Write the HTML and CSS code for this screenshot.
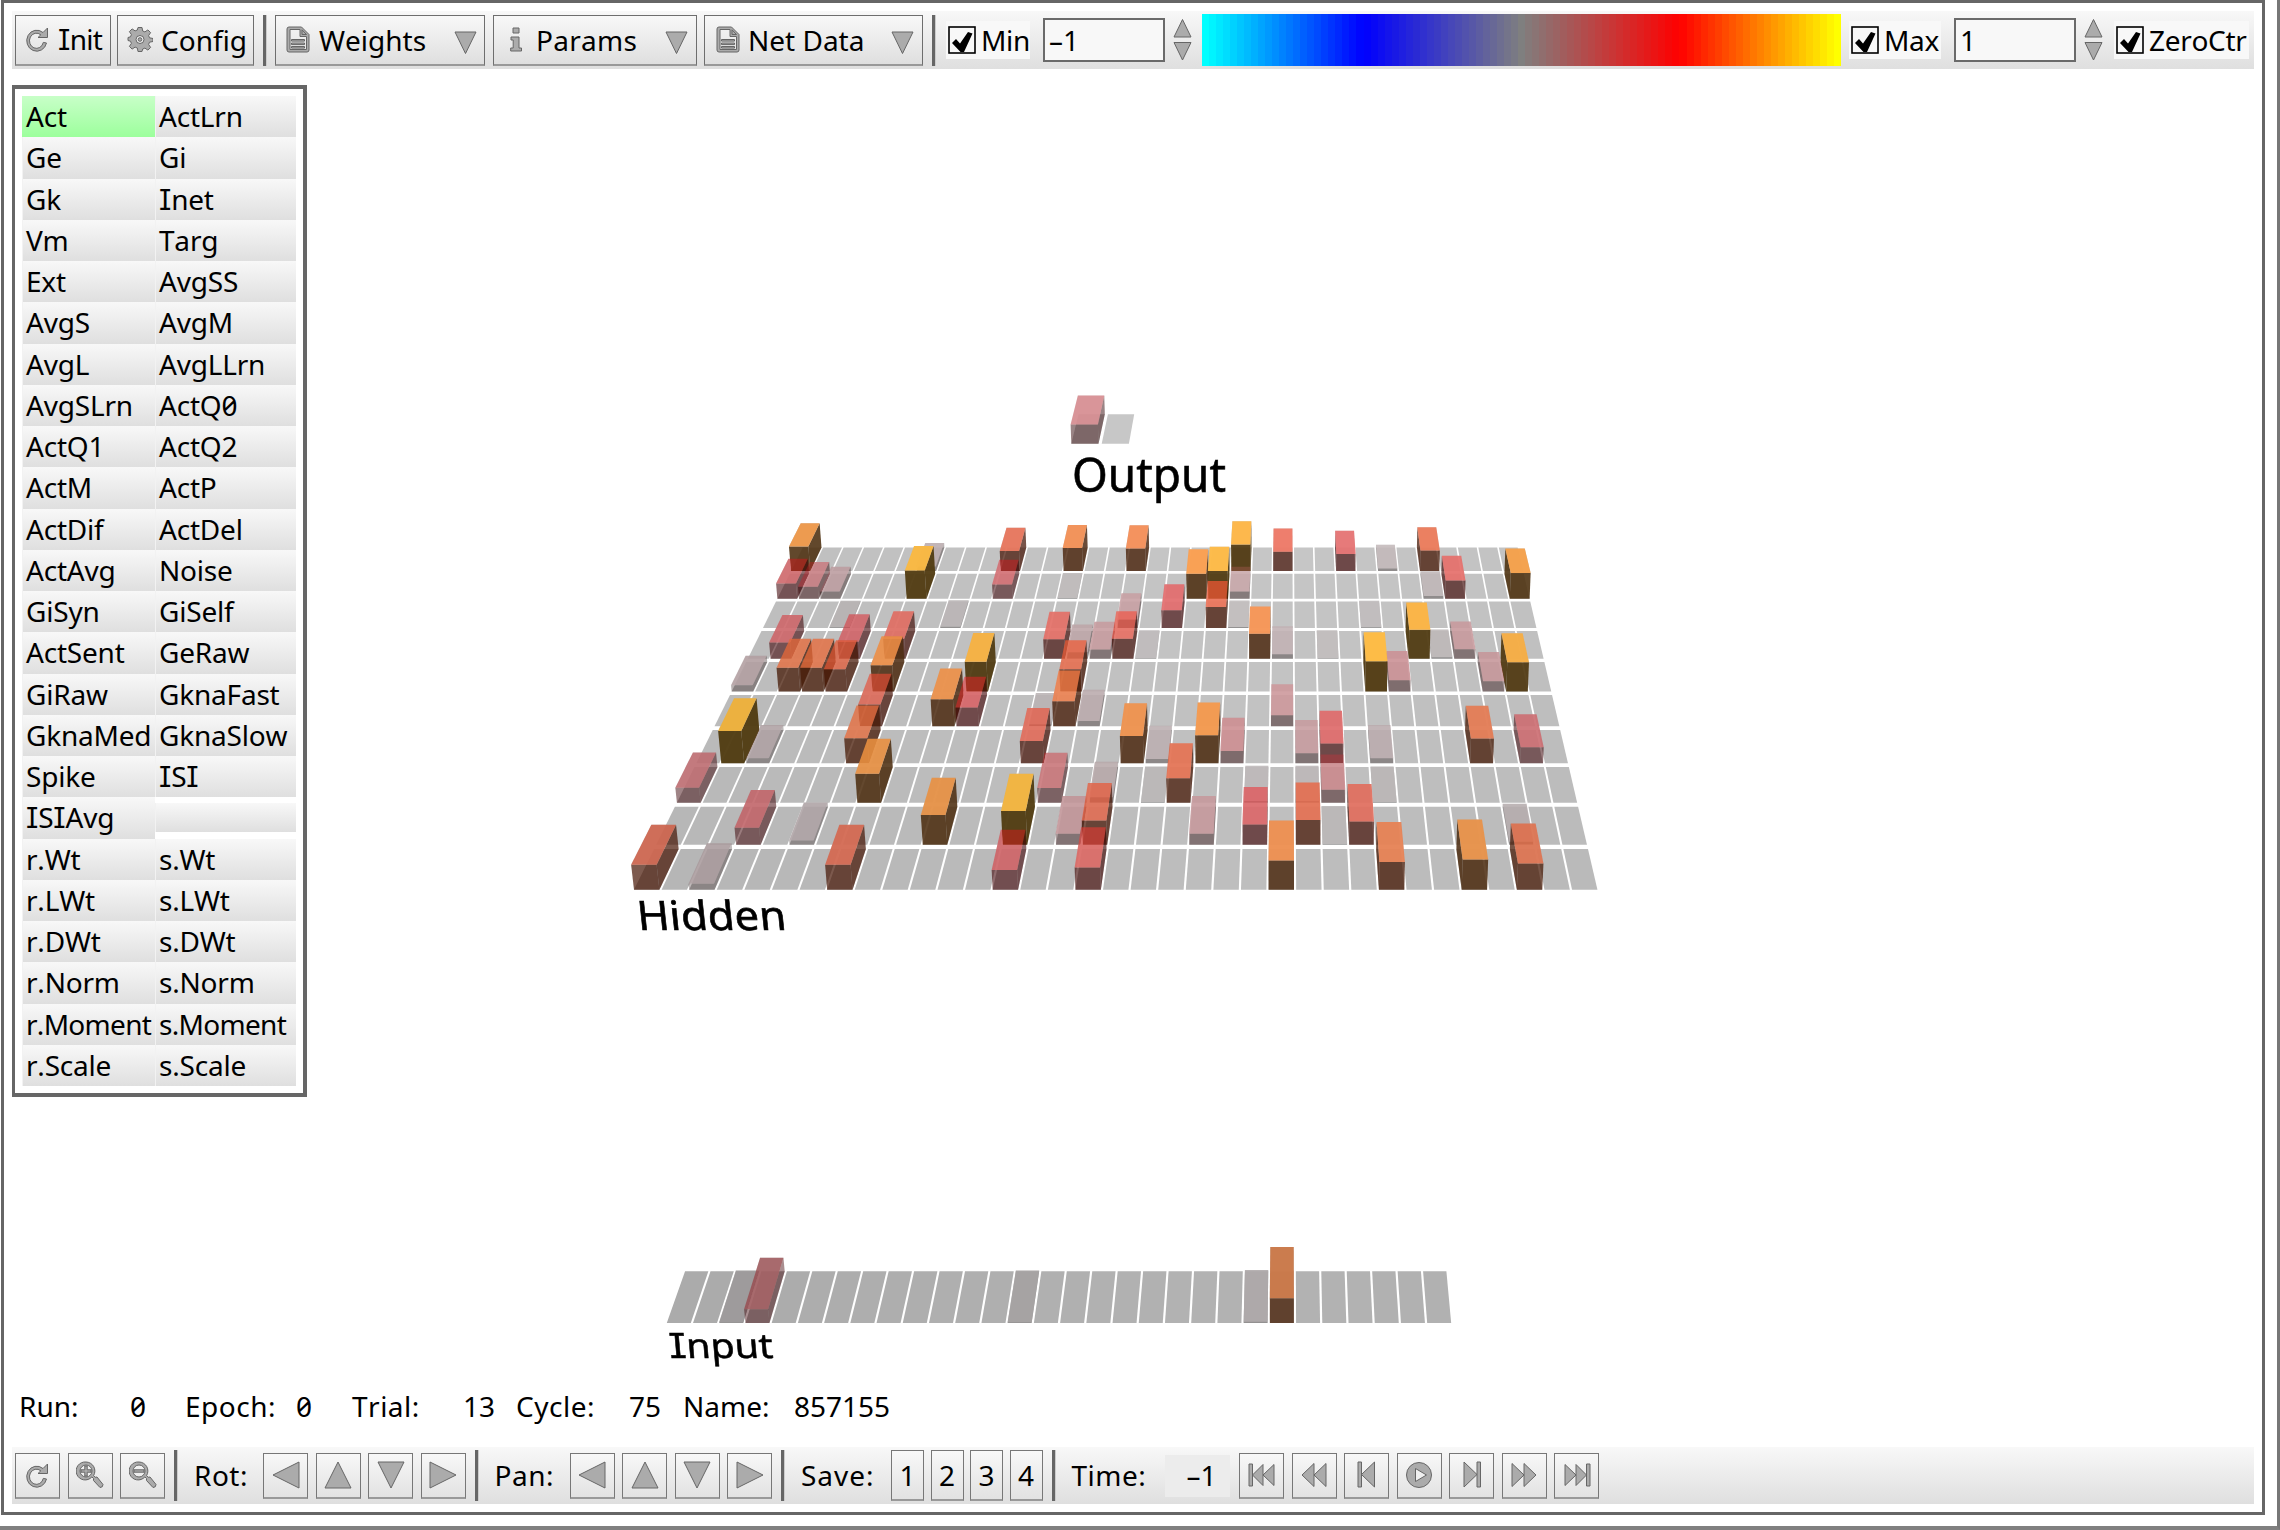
FILE: index.html
```html
<!DOCTYPE html>
<html lang="en">
<head>
<meta charset="utf-8">
<title>Network View</title>
<link rel="stylesheet" href="styles.css">
</head>
<body>
<svg class="defs" width="0" height="0">
  <symbol id="reload" viewBox="2 1 24 25"><path d="M19.5 6.500A10 10.500 0 1 0 23 17l-3.200-.6A7 7.600 0 1 1 17.300 8.800L14.500 11.500H24V2z"/></symbol>
  <symbol id="gear" viewBox="0 0 26 26"><path fill-rule="evenodd" d="M11 1h4l.7 3.500 2.200.9 3-2 2.700 2.700-2 3 .9 2.200 3.500.7v3l-3.500.7-.9 2.200 2 3-2.700 2.700-3-2-2.200.9L15 25h-4l-.7-3.500-2.200-.9-3 2-2.700-2.700 2-3-.9-2.200L1 14v-3l2.500-.7.9-2.200-2-3 2.700-2.700 3 2 2.200-.9zM13 9a4 4 0 1 0 0 8 4 4 0 0 0 0-8zm0 2.200a1.800 1.800 0 1 1 0 3.600 1.800 1.800 0 0 1 0-3.600z"/></symbol>
  <symbol id="doc" viewBox="0 0 24 27"><path fill-rule="evenodd" d="M3 1h12.500L23 8.500V24q0 2-2 2H3q-2 0-2-2V3q0-2 2-2zM4 3.500v20h16.500V10.500H14v-7z"/><path d="M16 3.800V8.500h4.500zM5.500 13.500h13v1.600h-13zM5.500 17h13v1.600h-13zM5.500 20.500h13v1.600h-13z"/></symbol>
  <symbol id="info" viewBox="0 0 12 25"><path d="M3 1h6v5H3zM1 10h8v11h2.500v3H.7v-3H3.200v-8H1z"/></symbol>
  <symbol id="zoomin" viewBox="0 0 28 28"><path fill-rule="evenodd" d="M10 1a9 9 0 0 1 7.600 13.600l1.600 1.700 1.800-.3 6 7.500q0 3-3 3l-6.500-7v-2l-1.600-1.600A9 9 0 1 1 10 1zm0 3a6 6 0 1 0 0 12 6 6 0 0 0 0-12z"/><path d="M8.800 5h2.400v3.800H15v2.400h-3.800V15H8.800v-3.800H5V8.800h3.800z"/></symbol>
  <symbol id="zoomout" viewBox="0 0 28 28"><path fill-rule="evenodd" d="M10 1a9 9 0 0 1 7.600 13.600l1.600 1.700 1.800-.3 6 7.500q0 3-3 3l-6.500-7v-2l-1.600-1.600A9 9 0 1 1 10 1zm0 3a6 6 0 1 0 0 12 6 6 0 0 0 0-12z"/><path d="M5 8.800h10v2.400H5z"/></symbol>
  <symbol id="left" viewBox="0 0 28 28"><path d="M27 1v26L1 14z"/></symbol>
  <symbol id="right" viewBox="0 0 28 28"><path d="M1 1v26l26-13z"/></symbol>
  <symbol id="up" viewBox="0 0 28 28"><path d="M1 27h26L14 1z"/></symbol>
  <symbol id="down" viewBox="0 0 28 28"><path d="M1 1h26L14 27z"/></symbol>
  <symbol id="tri" viewBox="0 0 23 24"><path d="M1 1h21L11.500 22.500z"/></symbol>
  <symbol id="spin" viewBox="0 0 19 44"><path d="M1 19h17L9.500 1.500zM1 24.500h17L9.500 42z"/></symbol>
  <symbol id="check" viewBox="0 0 28 28"><rect x="1" y="1" width="26" height="26"/><path d="M4 17l4-4 4 4.500 8-11.500 4.500 1.500-8.500 18.500h-3.500z"/></symbol>
  <symbol id="first" viewBox="0 0 28 28"><path d="M1 3h3.500v22H1zM4.500 14L15 3.500v21zM15 14L26 3.500v21z"/></symbol>
  <symbol id="rew" viewBox="0 0 28 28"><path d="M2 14L14 2.500v23zM14 14L26 2.500v23z"/></symbol>
  <symbol id="prev" viewBox="0 0 28 28"><path d="M5 1h3.500v25H5zM8.500 13.500L21.500 1v25z"/></symbol>
  <symbol id="play" viewBox="0 0 28 28"><circle cx="14" cy="14" r="12.500"/><path class="light" d="M10.500 7.500v13l11-6.500z"/></symbol>
  <symbol id="next" viewBox="0 0 28 28"><path d="M22.500 1H19v25h3.500zM19 13.500L6 1v25z"/></symbol>
  <symbol id="fwd" viewBox="0 0 28 28"><path d="M26 14L14 2.500v23zM14 14L2 2.500v23z"/></symbol>
  <symbol id="last" viewBox="0 0 28 28"><path d="M27 3h-3.500v22H27zM23.500 14L13 3.500v21zM13 14L2 3.500v21z"/></symbol>
</svg>
<div class="window">
<div class="frame">
  <div class="toolbar top">
    <div class="btn init"><svg class="icon i24"><use href="#reload"/></svg><span><i>I</i>nit</span></div>
    <div class="btn config"><svg class="icon i26"><use href="#gear"/></svg><span>Config</span></div>
    <div class="sep"></div>
    <div class="btn menu weights"><svg class="icon i24d"><use href="#doc"/></svg><span>Weights</span><svg class="icon caret"><use href="#tri"/></svg></div>
    <div class="btn menu params"><svg class="icon i12"><use href="#info"/></svg><span>Params</span><svg class="icon caret"><use href="#tri"/></svg></div>
    <div class="btn menu netdata"><svg class="icon i24d"><use href="#doc"/></svg><span>Net Data</span><svg class="icon caret"><use href="#tri"/></svg></div>
    <div class="sep sep2"></div>
    <div class="check min"><svg class="box"><use href="#check"/></svg><span>Min</span></div>
    <div class="field">–1</div>
    <svg class="icon spin"><use href="#spin"/></svg>
    <svg class="colorbar" id="colorbar" viewBox="0 0 91 1" preserveAspectRatio="none" shape-rendering="crispEdges"></svg>
    <div class="check max"><svg class="box"><use href="#check"/></svg><span>Max</span></div>
    <div class="field">1</div>
    <svg class="icon spin"><use href="#spin"/></svg>
    <div class="check zero"><svg class="box"><use href="#check"/></svg><span>ZeroCtr</span></div>
  </div>

  <div class="main">
    <div class="vars">
      <div class="on">Act</div><div>ActLrn</div>
      <div>Ge</div><div>Gi</div>
      <div>Gk</div><div><i>I</i>net</div>
      <div>Vm</div><div>Targ</div>
      <div>Ext</div><div>AvgSS</div>
      <div>AvgS</div><div>AvgM</div>
      <div>AvgL</div><div>AvgLLrn</div>
      <div>AvgSLrn</div><div>ActQ0</div>
      <div>ActQ1</div><div>ActQ2</div>
      <div>ActM</div><div>ActP</div>
      <div>ActDif</div><div>ActDel</div>
      <div>ActAvg</div><div>Noise</div>
      <div>GiSyn</div><div>GiSelf</div>
      <div>ActSent</div><div>GeRaw</div>
      <div>GiRaw</div><div>GknaFast</div>
      <div>GknaMed</div><div>GknaSlow</div>
      <div>Spike</div><div><i>I</i>S<i>I</i></div>
      <div><i>I</i>S<i>I</i>Avg</div><div class="blank"></div>
      <div>r.Wt</div><div>s.Wt</div>
      <div>r.LWt</div><div>s.LWt</div>
      <div>r.DWt</div><div>s.DWt</div>
      <div>r.Norm</div><div>s.Norm</div>
      <div class="tight">r.Moment</div><div class="tight">s.Moment</div>
      <div>r.Scale</div><div>s.Scale</div>
    </div>
    <svg class="scene" viewBox="320 69 1930 1311">
      <g id="layers"></g>
      <text transform="translate(1072 491.500)" font-size="48" textLength="154" lengthAdjust="spacingAndGlyphs">Output</text>
      <text transform="translate(638.500 930) skewX(6)" font-size="40.500" textLength="149" lengthAdjust="spacingAndGlyphs">Hidden</text>
      <text transform="translate(670 1357.500) skewX(5) scale(1 .84)" font-size="41" textLength="104" lengthAdjust="spacingAndGlyphs"><tspan class="serif-i">I</tspan>nput</text>
    </svg>
  </div>

  <div class="status">
    <span class="s1">Run:</span><span class="s2">0</span><span class="s3">Epoch:</span><span class="s4">0</span><span class="s5">Trial:</span><span class="s6">13</span><span class="s7">Cycle:</span><span class="s8">75</span><span class="s9">Name:</span><span>857155</span>
  </div>

  <div class="toolbar bottom">
    <div class="group">
      <div class="sq"><svg class="icon i24"><use href="#reload"/></svg></div>
      <div class="sq"><svg class="icon i28"><use href="#zoomin"/></svg></div>
      <div class="sq"><svg class="icon i28"><use href="#zoomout"/></svg></div>
    </div>
    <div class="sep"></div>
    <span class="label rot">Rot:</span>
    <div class="group">
      <div class="sq"><svg class="icon i28"><use href="#left"/></svg></div>
      <div class="sq"><svg class="icon i28"><use href="#up"/></svg></div>
      <div class="sq"><svg class="icon i28"><use href="#down"/></svg></div>
      <div class="sq"><svg class="icon i28"><use href="#right"/></svg></div>
    </div>
    <div class="sep"></div>
    <span class="label pan">Pan:</span>
    <div class="group">
      <div class="sq"><svg class="icon i28"><use href="#left"/></svg></div>
      <div class="sq"><svg class="icon i28"><use href="#up"/></svg></div>
      <div class="sq"><svg class="icon i28"><use href="#down"/></svg></div>
      <div class="sq"><svg class="icon i28"><use href="#right"/></svg></div>
    </div>
    <div class="sep"></div>
    <span class="label save">Save:</span>
    <div class="group nums"><div class="num">1</div><div class="num">2</div><div class="num">3</div><div class="num">4</div></div>
    <div class="sep"></div>
    <span class="label time">Time:</span>
    <div class="tval">–1</div>
    <div class="group">
      <div class="sq"><svg class="icon i28"><use href="#first"/></svg></div>
      <div class="sq"><svg class="icon i28"><use href="#rew"/></svg></div>
      <div class="sq"><svg class="icon i28"><use href="#prev"/></svg></div>
      <div class="sq"><svg class="icon i28"><use href="#play"/></svg></div>
      <div class="sq"><svg class="icon i28"><use href="#next"/></svg></div>
      <div class="sq"><svg class="icon i28"><use href="#fwd"/></svg></div>
      <div class="sq"><svg class="icon i28"><use href="#last"/></svg></div>
    </div>
  </div>
</div>
</div>
<script src="scene.js"></script>
</body>
</html>
```
FILE: styles.css
```css
* { box-sizing: border-box; }
body {
  margin: 0;
  background: #fff;
  color: #000;
  font: 28px/38px "Noto Sans", "Open Sans", sans-serif;
  font-feature-settings: "zero";
  font-kerning: none;
  white-space: nowrap;
}
i, .serif-i { font-style: normal; font-family: Inter, "Noto Sans", sans-serif; font-feature-settings: "cv08"; }
.defs { display: block; position: absolute; }
.window {
  width: 2280px;
  height: 1530px;
  border-right: 3px solid #777;
  border-bottom: 4px solid #808080;
  padding-left: 1px;
}
.frame {
  width: 2264px;
  height: 1515px;
  border: 3px solid #666;
  padding: 8px 8px 0 8px;
  display: flex;
  flex-direction: column;
}
.toolbar {
  display: flex;
  align-items: center;
  width: 2242px;
  background: linear-gradient(#f8f8f8, #dfdfdf);
}
.top { height: 58px; padding: 0 0 0 3px; }
.bottom { height: 57px; padding-left: 3px; }
.icon { display: block; fill: #ababab; stroke: #666; stroke-width: 1; flex: none; }
.i24 { width: 25px; height: 25px; }
.i26 { width: 26px; height: 27px; }
.i24d { width: 24px; height: 27px; }
.i12 { width: 12px; height: 25px; }
.i28 { width: 28px; height: 28px; }
.light { fill: #f0f0f0; }
.btn {
  height: 51px;
  flex: none;
  display: flex;
  align-items: center;
  border: 1px solid #6e6e6e;
  border-bottom: 2px solid #999;
  background: linear-gradient(#f8f8f8, #dfdfdf);
}
.init { width: 96px; padding-left: 9px; gap: 8px; }
.init span { letter-spacing: -.7px; }
.config { width: 137px; margin-left: 6px; padding-left: 9px; gap: 8px; }
.sep { width: 4px; height: 51px; background: #666; flex: none; border-right: 1px solid #ccc; }
.top .sep { margin: 0 8px 0 9px; }
.menu .caret { width: 23px; height: 24px; margin-left: auto; margin-top: 6px; }
.weights { width: 210px; padding: 0 7px 0 10px; gap: 9px; }
.params { width: 204px; margin-left: 8px; padding: 0 8px 0 16px; gap: 14px; }
.params span { letter-spacing: .3px; }
.netdata { width: 219px; margin-left: 7px; padding: 0 8px 0 11px; gap: 8px; }
.top .sep2 { margin: 0 10px 0 9px; }
.check { display: flex; align-items: center; background: #f8f8f8; height: 38px; padding-left: 2px; gap: 5px; flex: none; }
.box { width: 28px; height: 28px; fill: #000; flex: none; }
#check rect { fill: none; stroke: #000; stroke-width: 1.6; }
.min { width: 84px; }
.min span, .max span { letter-spacing: -.3px; }
.field {
  width: 122px;
  height: 44px;
  margin-left: 13px;
  padding: 1px 0 0 4px;
  border: 2px solid #6a6a6a;
  background: #f8f8f8;
  flex: none;
}
.spin { width: 19px; height: 44px; margin-left: 8px; }
.colorbar { width: 639px; height: 52px; margin-left: 10px; flex: none; }
.max { width: 92px; margin-left: 8px; }
.zero { width: 135px; margin-left: 11px; }
.zero span { letter-spacing: -.3px; }

.main { display: flex; height: 1311px; }
.vars {
  width: 295px;
  height: 1012px;
  margin: 16px 13px 0 0;
  border: 3px solid #666;
  border-top-width: 4px;
  border-right-width: 4px;
  border-bottom-width: 4px;
  padding: 7px;
  display: grid;
  grid-template-columns: 133px 141px;
  grid-template-rows: repeat(24, 41.25px);
  flex: none;
}
.vars div {
  padding-left: 4px;
  line-height: 40px;
  letter-spacing: -.2px;
  background: linear-gradient(#f8f8f8, #dfdfdf);
  box-shadow: inset 1px 0 #f2f2f2;
}
.vars .on { background: linear-gradient(#c8ffc8, #9cff9c); box-shadow: none; }
.vars .tight { letter-spacing: -.7px; }
.vars .blank { height: 29px; align-self: center; }
.scene { width: 1930px; height: 1311px; flex: none; isolation: isolate; background: #fff; }
.scene text { font-family: "Noto Sans", sans-serif; fill: #000; stroke: #000; stroke-width: .6; }
.scene .serif-i { font-family: Inter, sans-serif; }
.shadow { mix-blend-mode: darken; }

.status { height: 67px; padding: 7px 0 0 7px; display: flex; }
.status span { flex: none; }
.s1 { width: 111px; } .s2 { width: 55px; } .s3 { width: 111px; } .s4 { width: 56px; }
.s5 { width: 111px; } .s6 { width: 53px; } .s7 { width: 113px; } .s8 { width: 54px; } .s9 { width: 111px; }
.s3, .s5, .s7 { letter-spacing: .5px; }

.group { display: flex; gap: 7.500px; flex: none; }
.sq, .num {
  width: 45px;
  height: 46px;
  border: 1px solid #777;
  border-bottom: 2px solid #999;
  display: flex;
  align-items: center;
  justify-content: center;
  background: linear-gradient(#f8f8f8, #e2e2e2);
  flex: none;
}
.num { width: 33px; height: 51px; }
.nums { gap: 6.500px; }
.bottom .sep { margin-left: 9px; }
.label { margin-left: 16px; margin-top: -1px; flex: none; letter-spacing: .5px; }
.rot { width: 69px; }
.pan { width: 75px; }
.save { width: 90px; letter-spacing: 1px; }
.time { width: 93px; }
.tval { width: 65px; height: 42px; line-height: 41px; padding-right: 13px; margin-right: 9.500px; text-align: right; background: #ececec; flex: none; }
```
FILE: scene.js
```js
var NS = 'http://www.w3.org/2000/svg';

function add(parent, name, attrs) {
  var el = document.createElementNS(NS, name);
  for (var k in attrs) el.setAttribute(k, attrs[k]);
  parent.appendChild(el);
}

function mix(a, b, t) {
  return a.map(function (v, i) { return v + (b[i] - v) * t; });
}

// Diverging colour bar: cyan, blue, gray, red, yellow.
var MAP = [[0, 255, 255], [0, 0, 255], [127, 127, 127], [255, 0, 0], [255, 255, 0]];
var bar = document.getElementById('colorbar');
for (var i = 0; i < 91; i++) {
  var p = i / 90 * 4, n = Math.min(3, Math.floor(p));
  add(bar, 'rect', { x: i, y: 0, width: 1, height: 1, fill: 'rgb(' + mix(MAP[n], MAP[n + 1], p - n).map(Math.round) + ')' });
}

// Camera: vanishing column, horizon, and vertical convergence.
var XV = 1288, Y0 = -437.4, A = 1.42e-4;

// height, top colour, front colour, opacity
var STOPS = [
  [0, [188, 186, 186], [150, 150, 150], .2],
  [4, [188, 180, 181], [144, 140, 140], .2],
  [8, [186, 171, 173], [138, 132, 132], .25],
  [15, [199, 154, 157], [128, 112, 113], .3],
  [20, [204, 122, 126], [122, 94, 96], .38],
  [25, [214, 110, 114], [113, 75, 77], .5],
  [28, [224, 117, 111], [106, 70, 67], .6],
  [31, [224, 118, 92], [102, 67, 54], .7],
  [34, [232, 136, 92], [98, 65, 49], .78],
  [37, [238, 152, 82], [92, 64, 40], .88],
  [40, [242, 168, 74], [88, 66, 30], .92],
  [43, [250, 190, 68], [85, 65, 24], .97]
];

function shade(h) {
  for (var i = 1; i < STOPS.length - 1 && STOPS[i][0] < h; i++);
  var a = STOPS[i - 1], b = STOPS[i], t = Math.min(1, (h - a[0]) / (b[0] - a[0]));
  return { top: mix(a[1], b[1], t), front: mix(a[2], b[2], t), alpha: a[3] + (b[3] - a[3]) * t };
}

// Gray of a floor cell at a screen position.
function floorGray(x, y) {
  return Math.round(199 - Math.abs(x - 1250) / 600 * 8 - (y - 540) / 350 * 9);
}

// Paint that gives colour c when laid over the gray bg.
function glass(c, alpha, bg) {
  c.forEach(function (v) { alpha = Math.max(alpha, v > bg ? (v - bg) / (255 - bg) : (bg - v) / bg); });
  alpha = Math.min(1, alpha);
  return {
    fill: 'rgb(' + c.map(function (v) { return Math.max(0, Math.min(255, Math.round((v - (1 - alpha) * bg) / alpha))); }) + ')',
    'fill-opacity': alpha.toFixed(3)
  };
}

function drawLayer(L) {
  var g = document.getElementById('layers');
  var H = L.y - Y0;
  function pt(X, h, d) {
    var w = d - A * h;
    return (XV + X / w).toFixed(2) + ',' + (Y0 + (H - h) / w).toFixed(2);
  }
  function poly(pts, paint) {
    paint.points = pts.join(' ');
    add(g, 'polygon', paint);
  }
  var r, c, d, X;
  for (r = 0; r < L.rows; r++) {
    d = 1 + (L.rows - 1 - r) * L.dp;
    for (c = 0; c < L.cols; c++) {
      X = L.x - XV + c * L.p;
      var v = floorGray(XV + X / d, Y0 + H / d);
      poly([pt(X, 0, d), pt(X + L.w, 0, d), pt(X + L.w, 0, d + L.dw), pt(X, 0, d + L.dw)], { fill: 'rgb(' + [v, v, v] + ')' });
    }
  }
  for (r = 0; r < L.rows; r++) {
    d = 1 + (L.rows - 1 - r) * L.dp;
    var row = L.boxes[r].slice().sort(function (a, b) {
      return Math.abs(b[0] - 23) - Math.abs(a[0] - 23);
    });
    row.forEach(function (b) {
      X = L.x - XV + b[0] * L.p;
      var Y = H / d - b[1], h = (H - Y * d) / (1 - A * Y);
      var s = shade(h * L.k), R = X + L.w, D = d + L.dw;
      var sx = XV + X / d, sy = Y0 + H / d, bg = floorGray(sx, sy);
      var f = (1.06 - Math.abs(sx - 1250) / 600 * .09 - (sy - 540) / 350 * .06);
      if (b[1] > 4) f *= L.tint;
      var top = s.top.map(function (v) { return Math.min(252, v * f); });
      var dark = glass(s.front, s.alpha, bg);
      var lid = [pt(X, h, d), pt(R, h, d), pt(R, h, D), pt(X, h, D)];
      poly(lid, { fill: 'rgb(' + [bg, bg, bg] + ')', 'fill-opacity': .85, 'class': 'shadow' });
      if (R < 0) poly([pt(R, 0, d), pt(R, h, d), pt(R, h, D), pt(R, 0, D)], Object.assign({}, dark));
      if (X > 0) poly([pt(X, 0, d), pt(X, h, d), pt(X, h, D), pt(X, 0, D)], Object.assign({}, dark));
      poly([pt(X, 0, d), pt(R, 0, d), pt(R, h, d), pt(X, h, d)], dark);
      poly(lid, glass(top, s.alpha, bg));
    });
  }
}

// Each box is [column, front face height]; one list per row, back to front.
drawLayer({ x: 666.8, y: 1323, p: 26.22, w: 24, rows: 1, cols: 30, dp: .034, dw: .0303, k: 1.07, tint: .93,
  boxes: [[[2, .8], [3, 13.7], [13, .8], [22, 1.3], [23, 24.7]]] });

drawLayer({ x: 634, y: 889.7, p: 27.59, w: 25.4, rows: 10, cols: 35, dp: .0351, dw: .0316, k: 1, tint: 1,
  boxes: [
    [[0, 24.7], [6, 4.5], [10, 20], [13, 23], [16, 22.7], [21, 26.7], [23, 19.3], [26, 17], [28, 2.7], [30, 20.7]],
    [[0, 15.3], [1, 12], [2, 7.3], [6, 28.3], [10, 14.3], [13, .8], [19, 25], [20, 27.7], [21, 7.3], [30, 2.7], [31, 18.3], [34, 25.7]],
    [[3, .8], [8, 1.3], [16, 8.5], [18, 17.7], [20, 21], [21, 1], [27, .8]],
    [[1, 16.3], [4, 17], [6, 20], [13, 19.7], [14, 6.5], [15, 9.3], [16, 20], [17, .7], [22, 25], [23, 4.7], [25, .7], [29, 29], [30, 1.5], [31, 9.7]],
    [[0, 6.3], [2, 23.7], [3, 23.7], [4, 22.3], [6, 26.3], [10, 29.7], [14, 22.3], [27, 30.3], [28, 11.3], [32, 10.3], [33, 29.3]],
    [[6, 21.7], [9, 27], [10, 18.7], [13, 2], [14, 25], [15, 5.3], [23, 11]],
    [[1, 32.3], [2, 5], [6, 25], [13, 22.3], [17, 27.3], [18, 4.3], [20, 28], [21, 12.3], [24, 10], [25, 19.7], [27, 5], [31, 24.7], [33, 16]],
    [[0, 15], [7, 29], [14, 14.7], [16, 5.5], [18, .7], [19, 24.3], [22, 1.3], [24, 1.3], [25, 13], [27, .7]],
    [[3, 17], [5, 4.3], [10, 29.7], [13, 33.7], [15, 11], [16, 24.3], [20, 11], [22, 20.3], [24, 24.7], [25, .7], [26, 23.3], [32, 3]],
    [[0, 25], [2, 6], [7, 25], [13, 19.7], [16, 22.3], [23, 29.3], [27, 27.7], [30, 30.3], [32, 26.3]]
  ] });

drawLayer({ x: 1071.3, y: 443.7, p: 30.4, w: 27.2, rows: 1, cols: 2, dp: .04, dw: .0345, k: .8, tint: 1,
  boxes: [[[0, 19.3]]] });
```
